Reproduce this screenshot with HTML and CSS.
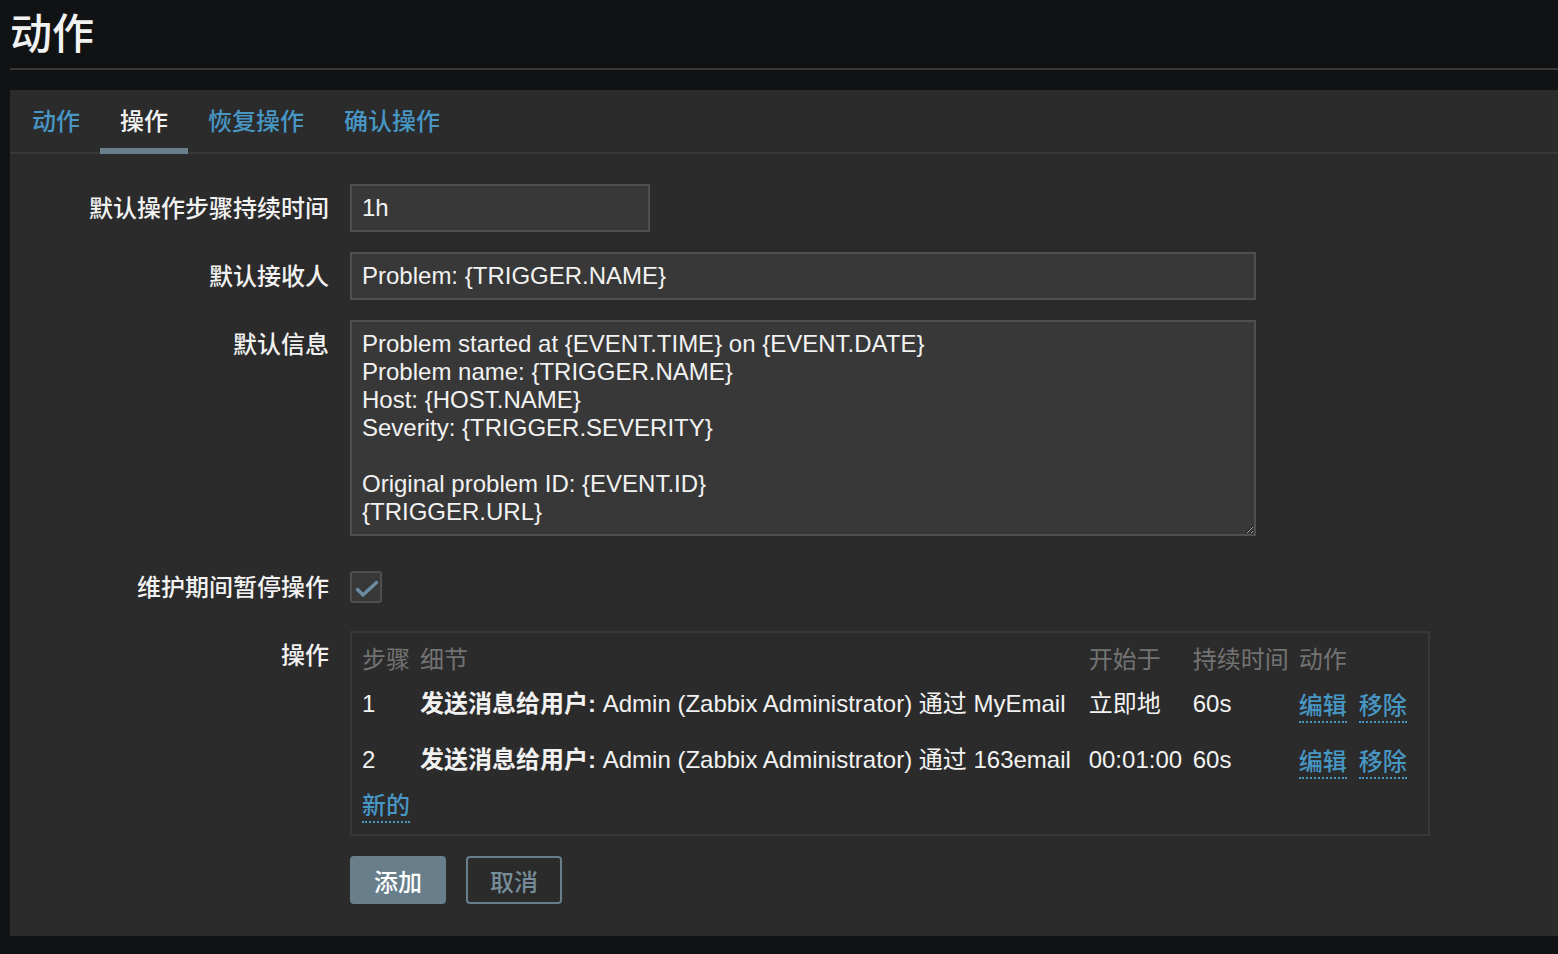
FILE: index.html
```html
<!DOCTYPE html>
<html lang="zh-CN">
<head>
<meta charset="utf-8">
<title>动作</title>
<link rel="stylesheet" href="styles.css">
</head>
<body>
<header class="page-head"><h1 class="page-title">动作</h1></header>
<main class="panel">
  <nav class="tabs">
    <a class="tab">动作</a>
    <a class="tab active">操作</a>
    <a class="tab">恢复操作</a>
    <a class="tab">确认操作</a>
  </nav>
  <div class="form">
    <div class="row">
      <label class="lbl">默认操作步骤持续时间</label>
      <div class="field"><input class="inp inp-short" type="text" value="1h"></div>
    </div>
    <div class="row">
      <label class="lbl">默认接收人</label>
      <div class="field"><input class="inp inp-wide" type="text" value="Problem: {TRIGGER.NAME}"></div>
    </div>
    <div class="row">
      <label class="lbl">默认信息</label>
      <div class="field"><textarea class="ta">Problem started at {EVENT.TIME} on {EVENT.DATE}
Problem name: {TRIGGER.NAME}
Host: {HOST.NAME}
Severity: {TRIGGER.SEVERITY}

Original problem ID: {EVENT.ID}
{TRIGGER.URL}</textarea></div>
    </div>
    <div class="row row-check">
      <label class="lbl">维护期间暂停操作</label>
      <div class="field field-check">
        <span class="check"><svg width="28" height="28" viewBox="0 0 28 28"><path d="M5.5 16.5 L11 22 L24.5 9.5" fill="none" stroke="#6b8ba0" stroke-width="3.4" stroke-linecap="round" stroke-linejoin="round"/></svg></span>
      </div>
    </div>
    <div class="row">
      <label class="lbl">操作</label>
      <div class="field">
        <div class="ops">
          <table class="ops-table">
            <colgroup><col class="c1"><col class="c2"><col class="c3"><col class="c4"><col class="c5"></colgroup>
            <thead>
              <tr><th>步骤</th><th>细节</th><th>开始于</th><th>持续时间</th><th>动作</th></tr>
            </thead>
            <tbody>
              <tr><td>1</td><td><b>发送消息给用户:</b> Admin (Zabbix Administrator) 通过 MyEmail</td><td>立即地</td><td>60s</td><td><a class="link gap">编辑</a><a class="link">移除</a></td></tr>
              <tr><td>2</td><td><b>发送消息给用户:</b> Admin (Zabbix Administrator) 通过 163email</td><td>00:01:00</td><td>60s</td><td><a class="link gap">编辑</a><a class="link">移除</a></td></tr>
              <tr class="new-row"><td colspan="5"><a class="link">新的</a></td></tr>
            </tbody>
          </table>
        </div>
      </div>
    </div>
    <div class="row row-buttons">
      <span class="lbl"></span>
      <div class="field buttons">
        <button class="btn btn-main" type="button">添加</button>
        <button class="btn btn-alt" type="button">取消</button>
      </div>
    </div>
  </div>
</main>
</body>
</html>
```

FILE: styles.css
```css
html, body {
  margin: 0;
  padding: 0;
  background: #111214;
}
body {
  font-family: "Liberation Sans", "Noto Sans CJK SC", sans-serif;
  font-size: 24px;
  color: #f2f2f2;
  width: 1558px;
  height: 954px;
  overflow: hidden;
}
.page-head {
  height: 68px;
  margin-left: 10px;
  border-bottom: 2px solid #383838;
  display: flex;
  align-items: center;
}
.page-title {
  margin: 0 0 6px 0;
  font-family: "Noto Sans CJK SC", sans-serif;
  font-size: 42px;
  font-weight: 500;
  line-height: 50px;
  color: #f2f2f2;
}
.panel {
  margin: 20px 0 0 10px;
  background: #2b2b2b;
  padding-bottom: 32px;
}
.tabs {
  display: flex;
  border-bottom: 2px solid #383838;
  height: 62px;
  padding-left: 2px;
}
.tab {
  padding: 3px 20px 0;
  line-height: 54px;
  height: 55px;
  border-bottom: 6px solid transparent;
  color: #4796c4;
  font-family: "Noto Sans CJK SC", sans-serif;
  font-weight: 500;
  cursor: pointer;
}
.tab.active {
  color: #f2f2f2;
  border-bottom-color: #6a7f8c;
}
.form {
  padding-top: 30px;
}
.row {
  display: grid;
  grid-template-columns: 319px 1fr;
  column-gap: 21px;
  margin-bottom: 20px;
}
.lbl {
  text-align: right;
  line-height: 46px;
  padding-bottom: 2px;
  color: #f2f2f2;
  font-family: "Noto Sans CJK SC", sans-serif;
  font-weight: 500;
  white-space: nowrap;
}
.inp, .ta {
  display: block;
  box-sizing: border-box;
  background: #383838;
  border: 2px solid #4f4f4f;
  color: #f2f2f2;
  font-family: "Liberation Sans", "Noto Sans CJK SC", sans-serif;
  font-size: 24px;
  outline: none;
  margin: 0;
}
.inp {
  height: 48px;
  padding: 0 10px;
}
.inp-short { width: 300px; }
.inp-wide { width: 906px; }
.ta {
  width: 906px;
  height: 216px;
  padding: 8px 10px;
  line-height: 28px;
  resize: both;
  overflow: hidden;
}
.row-check {
  padding-top: 7px;
}
.field-check {
  display: flex;
  align-items: center;
  height: 48px;
}
.check {
  box-sizing: border-box;
  width: 32px;
  height: 32px;
  border: 2px solid #4f4f4f;
  background: #383838;
  border-radius: 3px;
  display: flex;
  align-items: center;
  justify-content: center;
}
.check svg { display: block; }
.ops {
  width: 1080px;
  box-sizing: border-box;
  border: 2px solid #383838;
  padding: 0 5px;
}
.ops-table {
  width: 100%;
  table-layout: fixed;
  border-collapse: collapse;
}
.c1 { width: 58px; }
.c2 { width: 668px; }
.c3 { width: 104px; }
.c4 { width: 106px; }
.c5 { width: 129px; }
.ops-table th {
  text-align: left;
  font-weight: normal;
  color: #737373;
  padding: 11px 5px 4px;
  line-height: 28px;
  white-space: nowrap;
  font-family: "Noto Sans CJK SC", sans-serif;
}
.ops-table td {
  padding: 14px 5px;
  line-height: 28px;
  height: 28px;
  white-space: nowrap;
  vertical-align: middle;
  color: #f2f2f2;
}
.ops-table b {
  font-weight: bold;
}
.ops-table .new-row td {
  padding: 2px 5px 16px;
}
.link {
  color: #4796c4;
  border-bottom: 2px dotted #4796c4;
  cursor: pointer;
  font-family: "Noto Sans CJK SC", sans-serif;
  font-weight: 500;
  line-height: 28px;
  vertical-align: top;
}
.link.gap {
  margin-right: 12px;
}
.row-buttons {
  margin-top: 1px;
  margin-bottom: 0;
}
.buttons {
  display: flex;
  gap: 20px;
}
.btn {
  box-sizing: border-box;
  width: 96px;
  height: 48px;
  border-radius: 4px;
  font-family: "Noto Sans CJK SC", sans-serif;
  font-weight: 500;
  font-size: 24px;
  padding: 0;
  cursor: pointer;
}
.btn-main {
  background: #687e8b;
  border: 2px solid #687e8b;
  color: #ffffff;
}
.btn-alt {
  background: transparent;
  border: 2px solid #687e8b;
  color: #768d99;
}
```
